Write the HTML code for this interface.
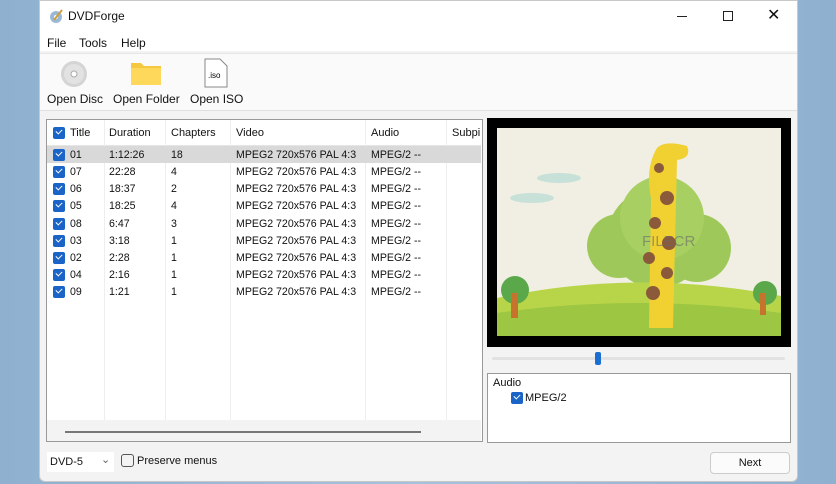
<!DOCTYPE html>
<html><head><style>
*{margin:0;padding:0;box-sizing:border-box}
body{width:836px;height:484px;background:linear-gradient(90deg,#8fb0cf,#a6c1dc 50%,#8fb0cf);font-family:"Liberation Sans",sans-serif;font-size:11px;color:#111;position:relative;overflow:hidden}
.win{position:absolute;left:39px;top:0;width:759px;height:482px;background:#f3f3f3;border-radius:0 0 6px 6px;border:1px solid #c8c8c8}
.abs{position:absolute}
.cb{position:absolute;width:12px;height:12px;background:#1a63c7;border-radius:2px}
.cb:after{content:"";position:absolute;left:3px;top:2px;width:5px;height:3px;border-left:1.5px solid #fff;border-bottom:1.5px solid #fff;transform:rotate(-45deg)}
.row{position:absolute;left:0;height:17px;width:434px;font-size:10.6px}
.row span{position:absolute;top:2px}
</style></head><body>
<div class="win">
 <div class="abs" style="left:0;top:0;width:757px;height:50px;background:#fff"></div>
 <svg class="abs" style="left:8px;top:7px" width="16" height="16"><circle cx="8" cy="9" r="6" fill="#9bb8d8"/><circle cx="8" cy="9" r="2" fill="#fff"/><path d="M6 12 L14 2" stroke="#c9a03a" stroke-width="2"/></svg>
 <div class="abs" style="left:28px;top:8px;font-size:12px">DVDForge</div>
 <div class="abs" style="left:637px;top:15px;width:10px;height:1px;background:#222"></div>
 <div class="abs" style="left:683px;top:10px;width:10px;height:10px;border:1px solid #222"></div>
 <div class="abs" style="left:727px;top:4px;font-size:16px">✕</div>
 <div class="abs" style="left:7px;top:35px;font-size:12px">File</div>
 <div class="abs" style="left:39px;top:35px;font-size:12px">Tools</div>
 <div class="abs" style="left:81px;top:35px;font-size:12px">Help</div>
 <div class="abs" style="left:0;top:52px;width:757px;height:58px;background:#fafafa;border-top:1px solid #e6e6e6;border-bottom:1px solid #e0e0e0"></div>
 <svg class="abs" style="left:20px;top:59px" width="28" height="28"><circle cx="14" cy="14" r="13" fill="#d4d4d4"/><circle cx="14" cy="14" r="10" fill="#e2e2e2"/><circle cx="14" cy="14" r="3" fill="#fff" stroke="#aaa"/></svg>
 <div class="abs" style="left:7px;top:91px;font-size:12px">Open Disc</div>
 <svg class="abs" style="left:91px;top:60px" width="30" height="24"><path d="M0 2h10l3 3h17v19H0z" fill="#f5c842"/><rect x="0" y="7" width="30" height="17" fill="#fdd85a"/></svg>
 <div class="abs" style="left:73px;top:91px;font-size:12px">Open Folder</div>
 <svg class="abs" style="left:164px;top:57px" width="24" height="30"><path d="M1 1h15l7 7v21H1z" fill="#fff" stroke="#888"/><text x="4" y="20" font-size="8" font-family="Liberation Sans">.iso</text></svg>
 <div class="abs" style="left:150px;top:91px;font-size:12px">Open ISO</div>

 <div class="abs" style="left:6px;top:118px;width:437px;height:323px;background:#fff;border:1px solid #999">
  <div class="abs" style="left:0;top:0;width:434px;height:26px;border-bottom:1px solid #e5e5e5"></div>
  <div class="cb" style="left:6px;top:7px"></div>
  <span class="abs" style="left:23px;top:7px">Title</span>
  <span class="abs" style="left:62px;top:7px">Duration</span>
  <span class="abs" style="left:124px;top:7px">Chapters</span>
  <span class="abs" style="left:189px;top:7px">Video</span>
  <span class="abs" style="left:324px;top:7px">Audio</span>
  <span class="abs" style="left:405px;top:7px">Subpi</span>
  <div class="abs" style="left:57px;top:0;width:1px;height:300px;background:#eee"></div>
  <div class="abs" style="left:118px;top:0;width:1px;height:300px;background:#eee"></div>
  <div class="abs" style="left:183px;top:0;width:1px;height:300px;background:#eee"></div>
  <div class="abs" style="left:318px;top:0;width:1px;height:300px;background:#eee"></div>
  <div class="abs" style="left:399px;top:0;width:1px;height:300px;background:#eee"></div>
  <div class="row" style="top:26px;background:#d9d9d9"></div>
  <div id="rows"></div>
  <div class="abs" style="left:0;top:300px;width:434px;height:21px;background:#f3f3f3"></div>
  <div class="abs" style="left:18px;top:311px;width:356px;height:2px;background:#777"></div>
 </div>

 <div class="abs" style="left:447px;top:117px;width:304px;height:229px;background:#000"></div>
 <svg class="abs" style="left:457px;top:127px" width="284" height="208" viewBox="0 0 284 208">
  <rect width="284" height="208" fill="#f1efe3"/>
  <ellipse cx="35" cy="70" rx="22" ry="5" fill="#c7e0d8"/><ellipse cx="62" cy="50" rx="22" ry="5" fill="#c7e0d8"/>
  <circle cx="160" cy="110" r="50" fill="#9ec95a"/><circle cx="122" cy="118" r="32" fill="#9ec95a"/><circle cx="200" cy="120" r="34" fill="#9ec95a"/><circle cx="165" cy="90" r="42" fill="#a8cf62"/>
  <path d="M0 170 Q140 140 284 168 V208 H0z" fill="#b8d54a"/>
  <path d="M0 185 Q140 165 284 185 V208 H0z" fill="#9dc642"/>
  <circle cx="18" cy="162" r="14" fill="#5ba84a"/><rect x="14" y="165" width="7" height="25" fill="#c6742c"/>
  <circle cx="268" cy="165" r="12" fill="#5ba84a"/><rect x="263" y="165" width="6" height="22" fill="#c6742c"/>
  <path d="M160 20 Q168 12 190 18 Q195 30 180 32 L176 200 H152 L154 70 Q148 40 160 20z" fill="#f0d131"/>
  <circle cx="162" cy="40" r="5" fill="#8a5a3a"/><circle cx="170" cy="70" r="7" fill="#8a5a3a"/><circle cx="158" cy="95" r="6" fill="#8a5a3a"/><circle cx="172" cy="115" r="7" fill="#8a5a3a"/><circle cx="152" cy="130" r="6" fill="#8a5a3a"/><circle cx="170" cy="145" r="6" fill="#8a5a3a"/><circle cx="156" cy="165" r="7" fill="#8a5a3a"/>
  <text x="145" y="118" font-size="15" fill="#6a6a6a" opacity=".6" font-family="Liberation Sans">FILECR</text>
 </svg>
 <div class="abs" style="left:452px;top:356px;width:293px;height:3px;background:#e2e2e2;border-radius:2px"></div>
 <div class="abs" style="left:555px;top:351px;width:6px;height:13px;background:#1a6fd1;border-radius:2px"></div>
 <div class="abs" style="left:447px;top:372px;width:304px;height:70px;background:#fff;border:1px solid #999"></div>
 <div class="abs" style="left:453px;top:376px">Audio</div>
 <div class="cb" style="left:471px;top:391px"></div>
 <div class="abs" style="left:485px;top:391px">MPEG/2</div>

 <div class="abs" style="left:7px;top:451px;width:67px;height:20px;background:#fff"></div>
 <div class="abs" style="left:10px;top:455px">DVD-5</div>
 <div class="abs" style="left:61px;top:452px;color:#666">⌄</div>
 <div class="abs" style="left:81px;top:453px;width:13px;height:13px;border:1px solid #555;border-radius:3px"></div>
 <div class="abs" style="left:97px;top:454px">Preserve menus</div>
 <div class="abs" style="left:670px;top:451px;width:80px;height:22px;background:#fbfbfb;border:1px solid #ccc;border-radius:4px;text-align:center;line-height:20px">Next</div>
</div>
<script>
var d=[["01","1:12:26","18"],["07","22:28","4"],["06","18:37","2"],["05","18:25","4"],["08","6:47","3"],["03","3:18","1"],["02","2:28","1"],["04","2:16","1"],["09","1:21","1"]],h="";
d.forEach(function(r,i){var t=27+i*17.15;h+='<div class="row" style="top:'+t+'px"><div class="cb" style="left:6px;top:2px"></div><span style="left:23px">'+r[0]+'</span><span style="left:62px">'+r[1]+'</span><span style="left:124px">'+r[2]+'</span><span style="left:189px">MPEG2 720x576 PAL 4:3</span><span style="left:324px">MPEG/2 --</span></div>'});
document.getElementById("rows").innerHTML=h;
</script>
</body></html>
